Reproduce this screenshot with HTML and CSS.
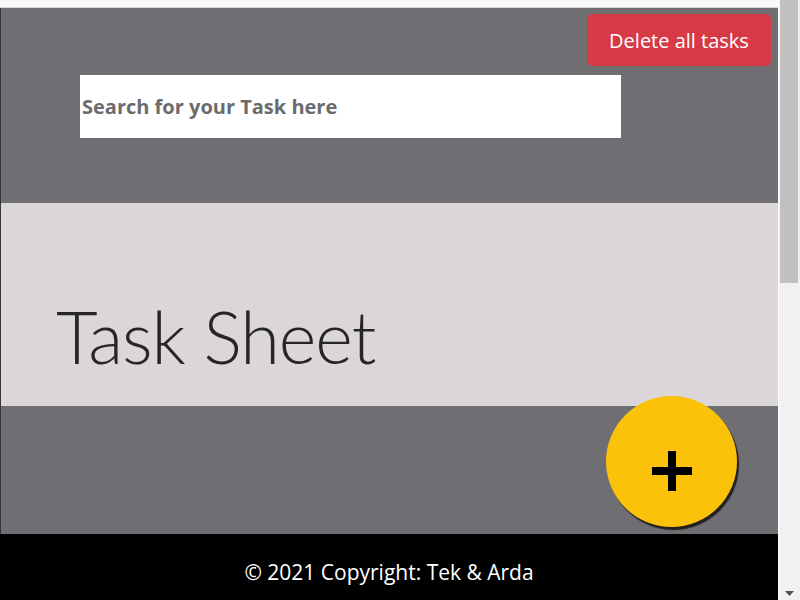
FILE: index.html
```html
<!DOCTYPE html>
<html lang="en">
<head>
<meta charset="utf-8">
<title>Task Sheet</title>
<link rel="stylesheet" href="styles.css">
</head>
<body>
<div class="window">
  <div class="page">
    <div class="topstrip"></div>
    <div class="sections">
      <header class="hero">
        <div class="hero-actions">
          <button class="btn-danger" type="button">Delete all tasks</button>
        </div>
        <input class="search" type="text" placeholder="Search for your Task here">
      </header>
      <section class="title-band">
        <h1 class="title">Task Sheet</h1>
      </section>
      <section class="add-band">
        <button class="fab" type="button" aria-label="Add task">
          <svg class="fab-icon" width="40" height="40" viewBox="0 0 40 40" aria-hidden="true">
            <rect x="0" y="16" width="40" height="8" fill="#000"/>
            <rect x="16" y="0" width="8" height="40" fill="#000"/>
          </svg>
        </button>
      </section>
    </div>
    <footer class="footer">© 2021 Copyright: Tek &amp; Arda</footer>
  </div>
  <div class="scrollbar">
    <div class="scroll-thumb"></div>
    <div class="scroll-track">
      <svg class="scroll-arrow" width="9" height="5" viewBox="0 0 9 5" aria-hidden="true"><polygon points="0,0 9,0 4.5,5" fill="#505050"/></svg>
    </div>
  </div>
</div>
</body>
</html>
```
FILE: styles.css
```css
* { box-sizing: border-box; }
html, body { margin: 0; padding: 0; height: 100%; overflow: hidden; }
body { font-family: "Open Sans", "Noto Sans", sans-serif; }

.window { display: flex; width: 800px; height: 600px; }
.page { width: 778px; display: flex; flex-direction: column; }

.topstrip { height: 8px; background: #f8f9fa; border-bottom: 1px solid #d8d8da; }

.sections { display: flex; flex-direction: column; border-left: 1px solid #35353a; }

.hero {
  height: 195px;
  background: #6f6e73;
  display: flex;
  flex-direction: column;
  padding: 6px 7px 0 79px;
}
.hero-actions { display: flex; justify-content: flex-end; }
.btn-danger {
  width: 184px;
  height: 52px;
  background: #d63a45;
  color: #fff;
  border: none;
  border-radius: 5px;
  font-family: "Open Sans", "Noto Sans", sans-serif;
  font-size: 20px;
  padding: 0;
}
.search {
  margin-top: 9px;
  width: 541px;
  height: 63px;
  border: none;
  background: #fff;
  padding: 0 0 0 2px;
  font-family: "Open Sans", "Noto Sans", sans-serif;
  font-size: 20px;
  font-weight: 700;
  outline: none;
}
.search::placeholder { color: #6b6b6e; opacity: 1; }

.title-band {
  height: 203px;
  background: #dbd6d8;
  display: flex;
  align-items: flex-end;
  padding: 0 0 34px 55px;
}
.title {
  margin: 0;
  font-family: "Lato", "Open Sans", sans-serif;
  font-weight: 300;
  font-size: 72px;
  letter-spacing: -1px;
  line-height: 1;
  color: #26252a;
}

.add-band {
  height: 128px;
  background: #6f6e73;
  display: flex;
  justify-content: flex-end;
  padding-right: 41px;
}
.fab {
  margin-top: -10px;
  width: 131px;
  height: 131px;
  border-radius: 50%;
  border: none;
  background: #fbc20a;
  box-shadow: 2px 3px 1px rgba(20, 20, 20, 0.85);
  display: flex;
  align-items: center;
  justify-content: center;
  padding: 19px 0 0 0;
  position: relative;
  z-index: 1;
}

.footer {
  height: 66px;
  background: #000;
  color: #fff;
  display: flex;
  align-items: center;
  justify-content: center;
  padding-top: 10px;
  font-size: 21px;
}

.scrollbar { width: 22px; display: flex; flex-direction: column; background: #f1f1f1; border-left: 1px solid #fff; }
.scroll-thumb { height: 283px; margin: 0 2px 0 1px; background: #c1c1c1; }
.scroll-track { flex: 1; display: flex; align-items: flex-end; justify-content: center; padding-bottom: 4px; }
```
